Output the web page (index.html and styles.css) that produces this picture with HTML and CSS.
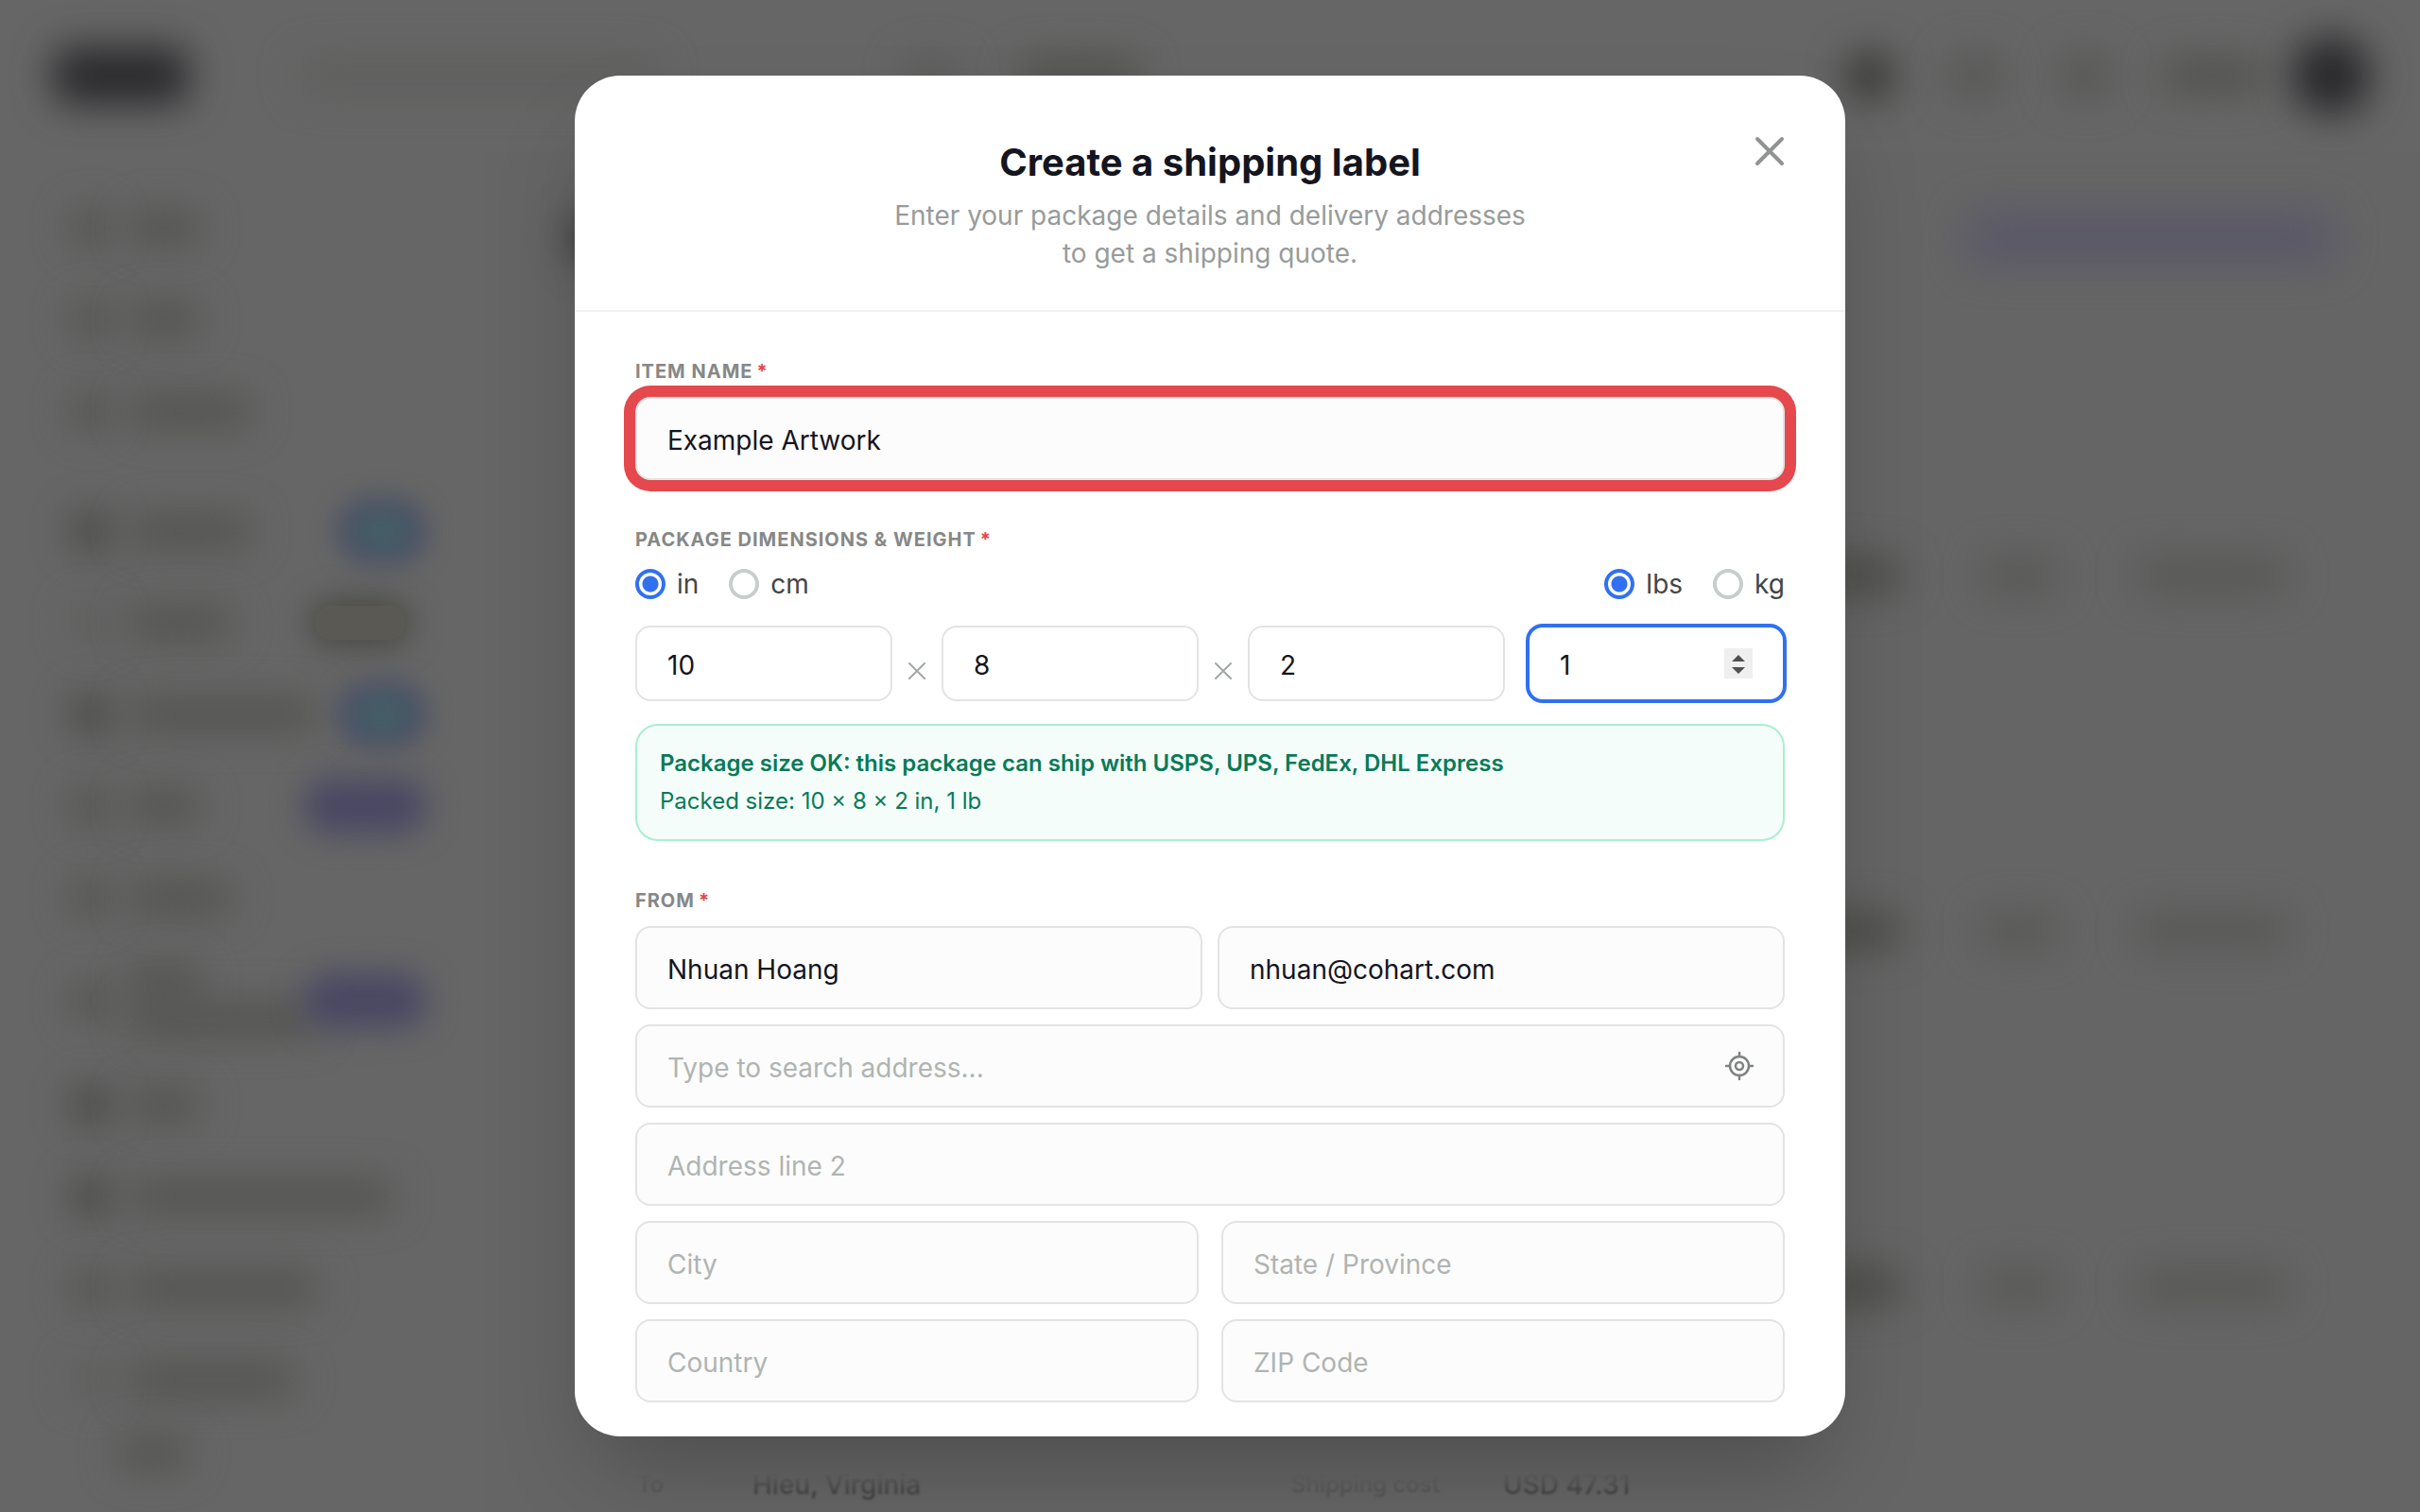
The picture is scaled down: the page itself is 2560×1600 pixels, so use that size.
FILE: index.html
```html
<!DOCTYPE html>
<html lang="en">
<head>
    <meta charset="UTF-8">
    <meta name="viewport" content="width=device-width, initial-scale=1.0">
    <title>Create a shipping label</title>
    <link rel="stylesheet" href="styles.css">
</head>
<body>
    <div class="app" aria-hidden="true">
        <div class="topbar">
            <span class="blob logo"></span>
            <span class="blob search"></span>
            <span class="blob tab"></span>
            <span class="blob tab tab-active"></span>
            <span class="topbar-right">
                <span class="blob dot dot-dark"></span>
                <span class="blob dot"></span>
                <span class="blob dot"></span>
                <span class="blob user"></span>
                <span class="blob avatar"></span>
            </span>
        </div>
        <div class="columns">
            <div class="sidebar">
                <div class="nav-item"><span class="blob icon"></span><span class="blob text w-xs"></span></div>
                <div class="nav-item"><span class="blob icon"></span><span class="blob text w-xs"></span></div>
                <div class="nav-item"><span class="blob icon"></span><span class="blob text w-m"></span></div>
                <div class="nav-item nav-group"><span class="blob icon icon-dark"></span><span class="blob text w-m"></span><span class="blob badge badge-teal"></span></div>
                <div class="nav-item"><span class="blob icon icon-light"></span><span class="blob text w-s"></span><span class="badge-wrap"><span class="badge-soon"></span></span></div>
                <div class="nav-item"><span class="blob icon icon-dark"></span><span class="blob text w-l"></span><span class="blob badge badge-teal"></span></div>
                <div class="nav-item"><span class="blob icon"></span><span class="blob text w-xs"></span><span class="blob badge"></span></div>
                <div class="nav-item"><span class="blob icon"></span><span class="blob text w-s"></span></div>
                <div class="nav-item nav-tall"><span class="blob icon"></span><span class="two-lines"><span class="blob text w-xs"></span><span class="blob text w-l"></span></span><span class="blob badge"></span></div>
                <div class="nav-item"><span class="blob icon icon-dark"></span><span class="blob text w-xs"></span></div>
                <div class="nav-item"><span class="blob icon icon-dark"></span><span class="blob text w-xl"></span></div>
                <div class="nav-item"><span class="blob icon"></span><span class="blob text w-l"></span></div>
                <div class="nav-item"><span class="blob icon icon-light"></span><span class="blob text w-ml"></span></div>
                <div class="nav-item nav-last"><span class="blob text w-xs"></span></div>
            </div>
            <div class="main">
                <div class="page-head">
                    <span class="blob page-title"></span>
                    <span class="blob page-link"></span>
                </div>
                <div class="order"><span class="blob cell cell-dark"></span><span class="blob cell cell-short"></span><span class="blob cell cell-long"></span></div>
                <div class="order"><span class="blob cell cell-dark"></span><span class="blob cell cell-short"></span><span class="blob cell cell-long"></span></div>
                <div class="order"><span class="blob cell cell-dark"></span><span class="blob cell cell-short"></span><span class="blob cell cell-long"></span></div>
                <div class="order-detail">
                    <span class="muted">To</span>
                    <span>Hieu, Virginia</span>
                    <span class="muted">Shipping cost</span>
                    <span>USD 47.31</span>
                </div>
            </div>
        </div>
    </div>

    <div class="overlay">
        <div class="modal" role="dialog" aria-modal="true" aria-labelledby="modalTitle">
            <div class="modal-header">
                <h1 id="modalTitle">Create a shipping label</h1>
                <p>Enter your package details and delivery addresses<br>to get a shipping quote.</p>
                <button type="button" class="close-button" aria-label="Close">
                    <svg width="32" height="32" viewBox="0 0 32 32" fill="none" stroke="currentColor" stroke-width="4" stroke-linecap="round">
                        <path d="M3 3L29 29M29 3L3 29"/>
                    </svg>
                </button>
            </div>

            <form class="modal-body">
                <div class="section">
                    <label class="section-label" for="itemName">Item name<span class="required">*</span></label>
                    <input type="text" id="itemName" class="field highlighted" value="Example Artwork">
                </div>

                <div class="section">
                    <div class="section-label">Package dimensions &amp; weight<span class="required">*</span></div>
                    <div class="units">
                        <div class="unit-group">
                            <label class="radio"><input type="radio" name="size" value="in" checked>in</label>
                            <label class="radio"><input type="radio" name="size" value="cm">cm</label>
                        </div>
                        <div class="unit-group">
                            <label class="radio"><input type="radio" name="weightUnit" value="lbs" checked>lbs</label>
                            <label class="radio"><input type="radio" name="weightUnit" value="kg">kg</label>
                        </div>
                    </div>
                    <div class="dimensions">
                        <input type="number" class="field field-number" aria-label="Length" value="10">
                        <span class="times">
                            <svg width="18" height="18" viewBox="0 0 18 18" fill="none" stroke="currentColor" stroke-width="2" stroke-linecap="round"><path d="M1 1L17 17M17 1L1 17"/></svg>
                        </span>
                        <input type="number" class="field field-number" aria-label="Width" value="8">
                        <span class="times">
                            <svg width="18" height="18" viewBox="0 0 18 18" fill="none" stroke="currentColor" stroke-width="2" stroke-linecap="round"><path d="M1 1L17 17M17 1L1 17"/></svg>
                        </span>
                        <input type="number" class="field field-number" aria-label="Height" value="2">
                        <div class="weight">
                            <input type="number" class="field field-number focused" aria-label="Weight" value="1">
                            <svg class="spinner" width="30" height="32" viewBox="0 0 30 32">
                                <rect width="30" height="32" fill="#efefef"/>
                                <path d="M15 7L22 14H8ZM15 27L8 20H22Z" fill="#505050"/>
                            </svg>
                        </div>
                    </div>
                    <div class="notice">
                        <strong>Package size OK: this package can ship with USPS, UPS, FedEx, DHL Express</strong>
                        <span>Packed size: 10 × 8 × 2 in, 1 lb</span>
                    </div>
                </div>

                <div class="section">
                    <div class="section-label">From<span class="required">*</span></div>
                    <div class="address">
                        <div class="row">
                            <input type="text" class="field" aria-label="Name" value="Nhuan Hoang">
                            <input type="email" class="field" aria-label="Email" value="nhuan@cohart.com">
                        </div>
                        <div class="search-field">
                            <input type="text" class="field" aria-label="Address" placeholder="Type to search address...">
                            <button type="button" class="locate-button" aria-label="Use my location">
                                <svg width="32" height="32" viewBox="0 0 32 32" fill="none" stroke="currentColor" stroke-width="2.5" stroke-linecap="round">
                                    <circle cx="16" cy="16" r="10"/>
                                    <circle cx="16" cy="16" r="4"/>
                                    <path d="M16 2V6M16 26V30M2 16H6M26 16H30"/>
                                </svg>
                            </button>
                        </div>
                        <input type="text" class="field" aria-label="Address line 2" placeholder="Address line 2">
                        <div class="row row-wide">
                            <input type="text" class="field" aria-label="City" placeholder="City">
                            <input type="text" class="field" aria-label="State / Province" placeholder="State / Province">
                        </div>
                        <div class="row row-wide">
                            <input type="text" class="field" aria-label="Country" placeholder="Country">
                            <input type="text" class="field" aria-label="ZIP Code" placeholder="ZIP Code">
                        </div>
                    </div>
                </div>
            </form>
        </div>
    </div>
</body>
</html>
```
FILE: styles.css
```css
* {
    box-sizing: border-box;
}

body {
    margin: 0;
    font-family: Inter, "Liberation Sans", sans-serif;
    font-size: 28px;
    color: #14151f;
    background-color: #666;
    height: 100vh;
    overflow: hidden;
}

input,
button {
    font-family: inherit;
    font-size: inherit;
    color: inherit;
}

/* dimmed app behind the dialog */
.app {
    position: fixed;
    inset: 0;
    overflow: hidden;
    background: #666;
}

.blob {
    display: block;
    flex-shrink: 0;
    border-radius: 20px;
    background: #51514f;
    filter: blur(20px);
}

.topbar {
    display: flex;
    align-items: center;
    height: 160px;
    padding: 0 52px 0 56px;
}

.logo {
    width: 144px;
    height: 60px;
    background: #29292c;
    margin-right: 116px;
}

.search {
    width: 380px;
    height: 36px;
    background: #5f5f5e;
    margin-right: 260px;
}

.tab {
    width: 60px;
    height: 36px;
    background: #5a5a59;
    margin-right: 60px;
}

.tab-active {
    width: 130px;
    background: #50504d;
}

.topbar-right {
    display: flex;
    align-items: center;
    gap: 60px;
    margin-left: auto;
}

.dot {
    width: 56px;
    height: 48px;
    background: #575756;
}

.dot-dark {
    width: 48px;
    background: #333331;
}

.user {
    width: 110px;
    height: 36px;
    margin-left: -8px;
}

.avatar {
    width: 84px;
    height: 84px;
    margin-left: -32px;
    border-radius: 50%;
    background: #29292c;
}

.columns {
    display: flex;
}

.sidebar {
    width: 512px;
    padding: 32px 60px;
}

.nav-item {
    display: flex;
    align-items: center;
    gap: 20px;
    height: 97px;
    padding-left: 16px;
}

.nav-group {
    margin-top: 30px;
}

.nav-tall {
    height: 122px;
}

.nav-last {
    height: 60px;
    padding-left: 64px;
}

.icon {
    width: 40px;
    height: 40px;
}

.icon-dark {
    background: #434341;
}

.icon-light {
    background: #5d5d5c;
}

.text {
    height: 32px;
}

.two-lines {
    display: flex;
    flex-direction: column;
    gap: 8px;
    width: 150px;
}

.w-xs { width: 76px; }
.w-s { width: 110px; }
.w-m { width: 130px; }
.w-ml { width: 176px; }
.w-l { width: 200px; }
.w-xl { width: 280px; }

.badge {
    width: 132px;
    height: 60px;
    margin-left: auto;
    border-radius: 30px;
    background: #4a4863;
    filter: blur(16px);
}

.badge-teal {
    width: 96px;
    height: 72px;
    border-radius: 36px;
    background: radial-gradient(#446066 20%, #4d4b66 75%);
    filter: blur(12px);
}

.badge-wrap {
    margin-left: auto;
    margin-right: 24px;
    border-radius: 20px;
    box-shadow: 0 0 32px 6px #484846;
}

.badge-soon {
    display: block;
    width: 94px;
    height: 36px;
    border-radius: 18px;
    background: #5b5953;
}

.main {
    flex: 1;
    background: #656565;
    padding: 0 90px 0 92px;
}

.page-head {
    display: flex;
    align-items: center;
    justify-content: space-between;
    height: 184px;
    margin-bottom: 77px;
}

.page-title {
    width: 300px;
    height: 48px;
    background: #333;
}

.page-link {
    width: 390px;
    height: 56px;
    background: #5a5868;
}

.order {
    display: flex;
    align-items: center;
    justify-content: flex-end;
    gap: 84px;
    height: 376px;
    padding-right: 50px;
}

.cell {
    width: 100px;
    height: 36px;
    background: #575756;
}

.cell-dark { background: #4a4a48; }
.cell-short { width: 80px; }
.cell-long { width: 160px; }

.order-detail {
    display: grid;
    grid-template-columns: 122px 570px 224px 1fr;
    padding-left: 70px;
    line-height: 44px;
    font-size: 28px;
    font-weight: 500;
    color: #414143;
    filter: blur(1px);
    -webkit-mask-image: linear-gradient(transparent 20%, #000 75%);
    mask-image: linear-gradient(transparent 20%, #000 75%);
}

.order-detail .muted {
    color: #545453;
    font-size: 24px;
}

/* dialog */
.overlay {
    position: fixed;
    inset: 0;
    display: flex;
    align-items: center;
    justify-content: center;
}

.modal {
    width: 1344px;
    max-width: 94%;
    background: #fff;
    border-radius: 48px;
    box-shadow: 0 50px 100px -24px rgba(0, 0, 0, 0.25);
}

.modal-header {
    position: relative;
    padding: 68px 64px 40px;
    border-bottom: 2px solid #f1f3f2;
    text-align: center;
}

.modal-header h1 {
    margin: 0 0 12px;
    font-size: 40px;
    font-weight: 700;
    line-height: 48px;
}

.modal-header p {
    margin: 0;
    line-height: 40px;
    color: #989b99;
}

.close-button {
    position: absolute;
    top: 64px;
    right: 64px;
    display: flex;
    padding: 0;
    border: none;
    background: none;
    color: #8f9391;
    cursor: pointer;
}

.modal-body {
    display: flex;
    flex-direction: column;
    gap: 50px;
    padding: 50px 64px 36px;
}

.section-label {
    display: block;
    margin-bottom: 14px;
    font-size: 20px;
    font-weight: 700;
    line-height: 26px;
    letter-spacing: 1px;
    text-transform: uppercase;
    color: #868887;
}

.required {
    margin-left: 4px;
    color: #e5484d;
}

.field {
    display: block;
    width: 100%;
    min-width: 0;
    height: 88px;
    padding: 4px 32px 0;
    border: 2px solid #e2e4e3;
    border-radius: 16px;
    outline: none;
    background: #fcfcfc;
}

.field::placeholder {
    color: #b0b4b2;
    opacity: 1;
}

.highlighted {
    box-shadow: 0 0 0 12px #e5484d;
}

.units {
    display: flex;
    justify-content: space-between;
    align-items: center;
    height: 40px;
    margin-bottom: 24px;
    color: #434548;
}

.unit-group {
    display: flex;
    gap: 32px;
}

.radio {
    display: flex;
    align-items: center;
    gap: 12px;
}

.radio input {
    appearance: none;
    width: 32px;
    height: 32px;
    margin: 0;
    border: 4px solid #c8cecb;
    border-radius: 50%;
}

.radio input:checked {
    border-color: #3171f0;
    background: radial-gradient(circle, #3171f0 8px, #fff 9px);
}

.dimensions {
    display: grid;
    grid-template-columns: 1fr 52px 1fr 52px 1fr 24px 1fr;
}

.field-number {
    height: 80px;
    background: #fff;
    appearance: textfield;
}

.field-number::-webkit-inner-spin-button {
    appearance: none;
    margin: 0;
}

.times {
    display: flex;
    align-items: center;
    justify-content: center;
    padding-top: 16px;
    color: #a3a7a5;
}

.weight {
    position: relative;
    grid-column: 7;
}

.focused {
    border-color: #3171f0;
    box-shadow: 0 0 0 2px #3171f0;
}

.spinner {
    position: absolute;
    top: 24px;
    right: 34px;
}

.notice {
    display: flex;
    flex-direction: column;
    margin-top: 24px;
    padding: 20px 24px;
    border: 2px solid #a8efd0;
    border-radius: 24px;
    background: #f5fdfa;
    font-size: 24px;
    line-height: 40px;
    color: #077a57;
}

.notice strong {
    font-weight: 600;
}

.address {
    display: flex;
    flex-direction: column;
    gap: 16px;
}

.row {
    display: flex;
    gap: 16px;
}

.row-wide {
    gap: 24px;
}

.search-field {
    position: relative;
}

.locate-button {
    position: absolute;
    top: 28px;
    right: 32px;
    display: flex;
    padding: 0;
    border: none;
    background: none;
    color: #7f8381;
    cursor: pointer;
}
```
